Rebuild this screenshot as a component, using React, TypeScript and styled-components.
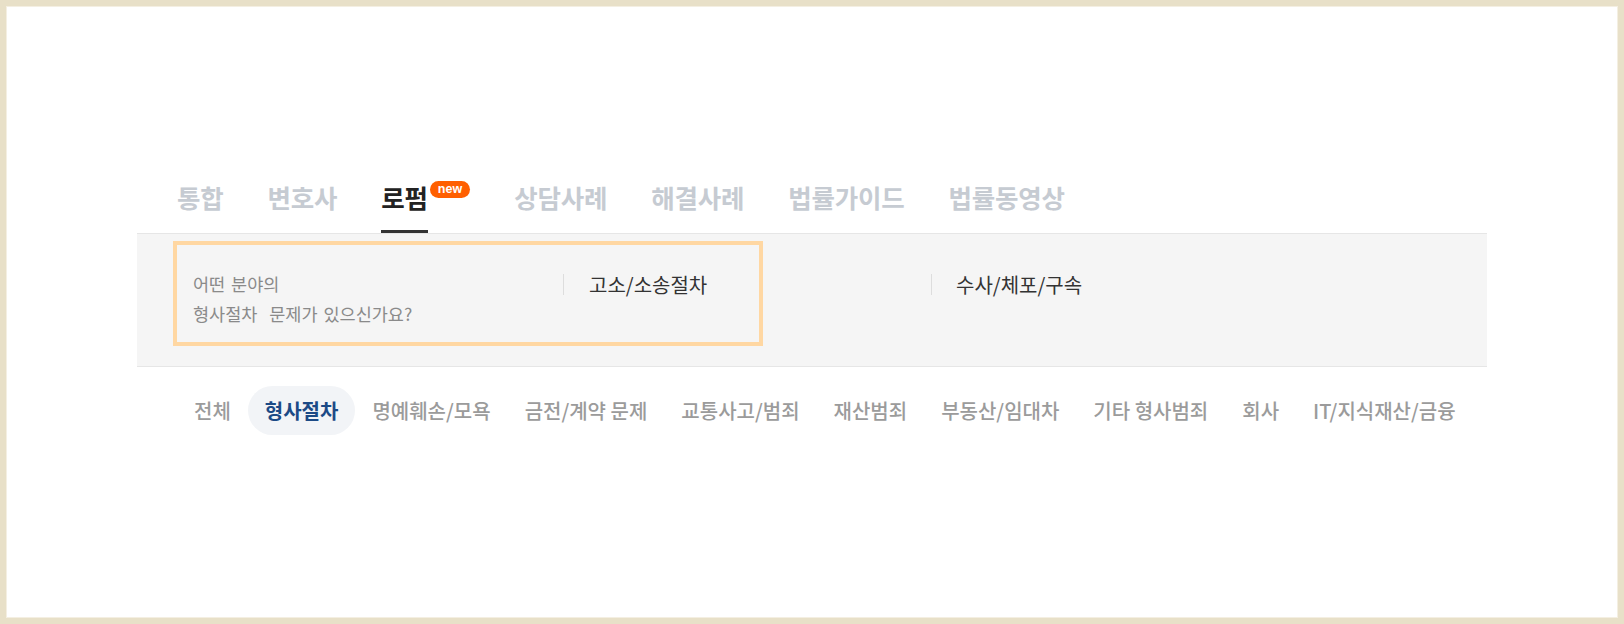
import React from 'react'
import styled, { createGlobalStyle } from 'styled-components'

const GlobalStyle = createGlobalStyle`
  html, body {
    margin: 0;
    padding: 0;
    background: #ffffff;
  }
  body {
    font-family: "Noto Sans CJK KR", "Noto Sans", sans-serif;
  }
  * {
    box-sizing: border-box;
  }
`

const TABS = ['통합', '변호사', '로펌', '상담사례', '해결사례', '법률가이드', '법률동영상']
const ACTIVE_TAB = '로펌'

const CATEGORIES = [
  '전체',
  '형사절차',
  '명예훼손/모욕',
  '금전/계약 문제',
  '교통사고/범죄',
  '재산범죄',
  '부동산/임대차',
  '기타 형사범죄',
  '회사',
  'IT/지식재산/금융',
]
const ACTIVE_CATEGORY = '형사절차'

export default function App() {
  return (
    <>
      <GlobalStyle />
      <Frame>
        <Container>
          <TabBar>
            {TABS.map((tab) => (
              <TabItem key={tab}>
                <TabLabel $active={tab === ACTIVE_TAB}>{tab}</TabLabel>
                {tab === ACTIVE_TAB && <NewBadge>new</NewBadge>}
              </TabItem>
            ))}
          </TabBar>

          <FilterPanel>
            <Highlight>
              <Question>
                어떤 분야의
                <br />
                형사절차&nbsp;&nbsp;문제가 있으신가요?
              </Question>
              <Option>고소/소송절차</Option>
            </Highlight>
            <Option $outside>수사/체포/구속</Option>
          </FilterPanel>

          <CategoryRow>
            {CATEGORIES.map((c) => (
              <Category key={c} $active={c === ACTIVE_CATEGORY}>
                {c}
              </Category>
            ))}
          </CategoryRow>
        </Container>
      </Frame>
    </>
  )
}

const Frame = styled.div`
  width: 1624px;
  height: 624px;
  border: 6px solid #e8e0c8;
  box-shadow: inset 0 0 0 1px #f4efe2;
  padding-top: 174px;
  background: #ffffff;
`

const Container = styled.div`
  width: 1350px;
  margin: 0 auto;
`

const TabBar = styled.div`
  display: flex;
  gap: 44px;
  padding-left: 40px;
`

const TabItem = styled.div`
  display: flex;
  align-items: flex-start;
`

const TabLabel = styled.div<{ $active?: boolean }>`
  font-size: 25.5px;
  line-height: 34px;
  font-weight: 700;
  letter-spacing: -0.2px;
  padding-bottom: 16px;
  color: ${(p) => (p.$active ? '#222222' : '#c6cbd2')};
  border-bottom: 3px solid ${(p) => (p.$active ? '#333333' : 'transparent')};
  cursor: pointer;
`

const NewBadge = styled.span`
  display: inline-block;
  margin-left: 2px;
  margin-top: 1px;
  height: 17px;
  padding: 0 8px;
  border-radius: 9px;
  background: #ff5f00;
  color: #ffffff;
  font-family: "Liberation Sans", Arial, sans-serif;
  font-size: 12.5px;
  line-height: 16px;
  font-weight: 700;
`

const FilterPanel = styled.div`
  display: flex;
  align-items: flex-start;
  background: #f5f5f5;
  border-top: 1px solid #e6e6e6;
  border-bottom: 1px solid #e6e6e6;
  padding: 7px 0 20px 36px;
`

const Highlight = styled.div`
  display: flex;
  align-items: flex-start;
  width: 590px;
  height: 105px;
  border: 4px solid #ffd7a2;
`

const Question = styled.div`
  width: 386px;
  padding: 24px 16px 13px;
  font-size: 17.5px;
  line-height: 30px;
  word-spacing: 2px;
  color: #8a8a8a;
  white-space: nowrap;
`

const Option = styled.div<{ $outside?: boolean }>`
  margin-top: ${(p) => (p.$outside ? '33px' : '29px')};
  margin-left: ${(p) => (p.$outside ? '168px' : '0')};
  padding-left: ${(p) => (p.$outside ? '24px' : '25px')};
  border-left: 1px solid #dddddd;
  font-size: 20px;
  line-height: 21px;
  color: #333333;
  white-space: nowrap;
`

const CategoryRow = styled.div`
  display: flex;
  margin-top: 19px;
  padding-left: 40px;
`

const Category = styled.div<{ $active?: boolean }>`
  height: 49px;
  line-height: 49px;
  padding: 0 17px;
  border-radius: 25px;
  font-size: 20px;
  font-weight: ${(p) => (p.$active ? 700 : 500)};
  color: ${(p) => (p.$active ? '#1c4a86' : '#9b9b9b')};
  background: ${(p) => (p.$active ? '#f2f4f7' : 'transparent')};
  white-space: nowrap;
  cursor: pointer;
`
